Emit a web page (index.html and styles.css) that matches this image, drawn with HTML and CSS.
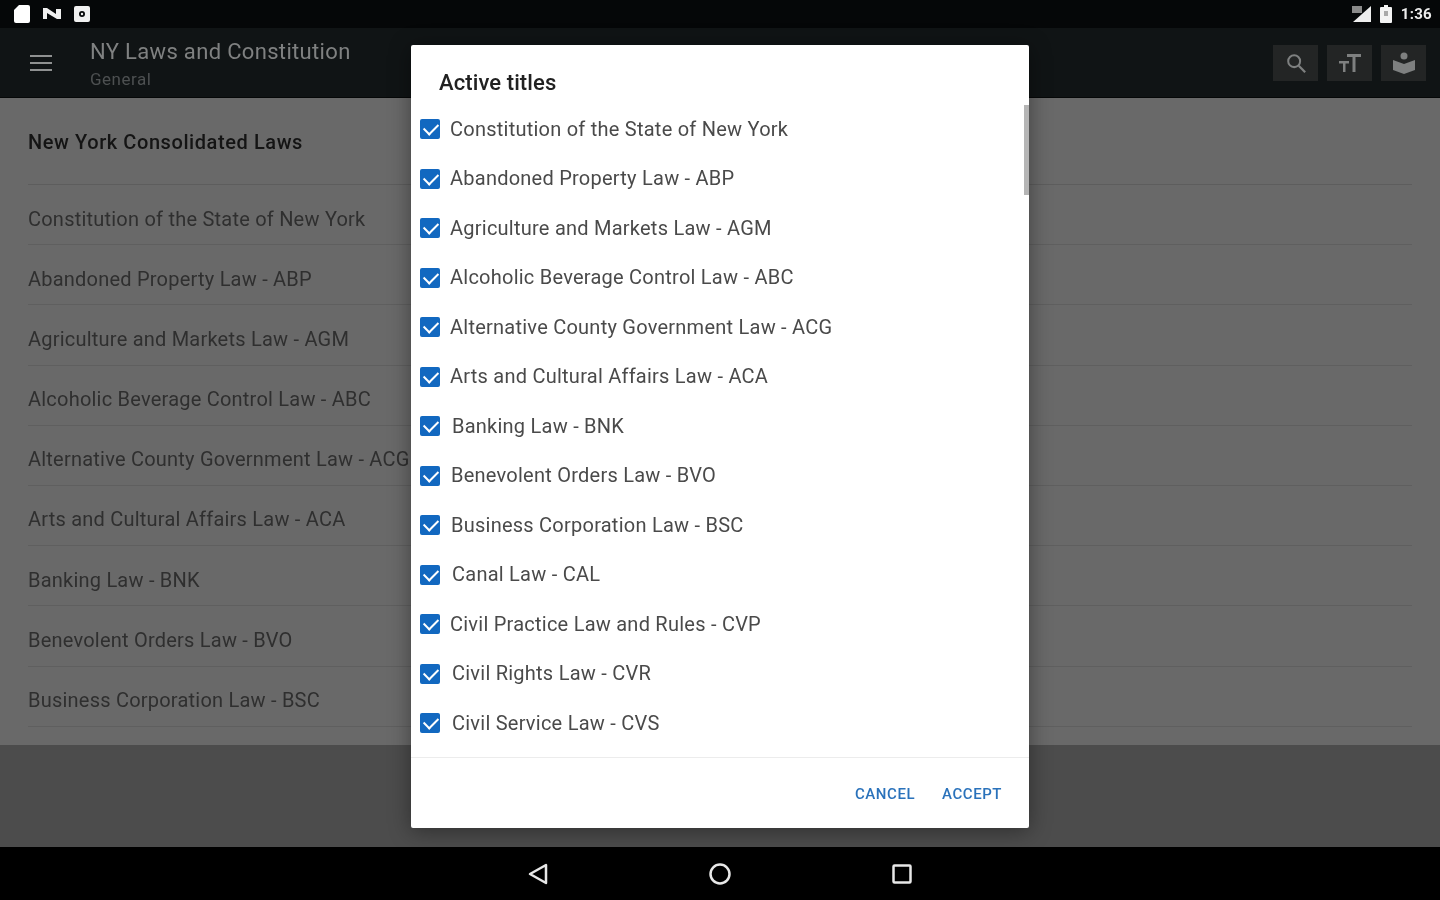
FILE: index.html
```html
<!DOCTYPE html>
<html lang="en">
<head>
    <meta charset="UTF-8">
    <title>NY Laws and Constitution</title>
    <link rel="stylesheet" href="styles.css">
</head>
<body>

    <div class="statusbar">
        <div class="status-left">
            <svg width="16" height="18" viewBox="0 0 16 18"><path d="M5 0h9a2 2 0 0 1 2 2v14a2 2 0 0 1-2 2H2a2 2 0 0 1-2-2V5z" fill="#fff"/></svg>
            <svg width="18" height="16" viewBox="0 0 18 16"><path d="M0 2h4l9 6V3h5v10h-4L4 7v6H0z" fill="#f0f0f0"/></svg>
            <svg width="16" height="16" viewBox="0 0 16 16"><path fill-rule="evenodd" d="M2 0h12a2 2 0 0 1 2 2v12a2 2 0 0 1-2 2H2a2 2 0 0 1-2-2V2a2 2 0 0 1 2-2zm6 5a3 3 0 1 0 0 6 3 3 0 0 0 0-6z" fill="#f0f0f0"/><circle cx="8" cy="8" r="1.200" fill="#f0f0f0"/></svg>
        </div>
        <div class="status-right">
            <svg width="20" height="18" viewBox="0 0 20 18"><path d="M20 1v16H2z" fill="#eee"/><path d="M1 1h10v7H1z" fill="#8a8a8a"/></svg>
            <svg width="12" height="18" viewBox="0 0 12 18"><path fill="#f4f4f4" d="M4 0h4v2h3a1 1 0 0 1 1 1v14a1 1 0 0 1-1 1H1a1 1 0 0 1-1-1V3a1 1 0 0 1 1-1h3z"/><path fill="#aaa" d="M4 6h4v5H4z"/></svg>
            <span class="clock">1:36</span>
        </div>
    </div>

    <div class="toolbar">
        <svg class="menu-icon" width="22" height="18" viewBox="0 0 22 18"><path d="M0 1h22v2H0zM0 8h22v2H0zM0 15h22v2H0z" fill="#8f9191"/></svg>
        <div class="toolbar-title">
            <div class="app-name">NY Laws and Constitution</div>
            <div class="app-sub">General</div>
        </div>
        <div class="toolbar-actions">
            <div class="action">
                <svg width="22" height="22" viewBox="0 0 24 24"><circle cx="10" cy="10" r="6.500" fill="none" stroke="#7e8080" stroke-width="2.200"/><path d="M15 15l7 7" stroke="#7e8080" stroke-width="2.400"/></svg>
            </div>
            <div class="action">
                <svg width="24" height="22" viewBox="0 0 24 22"><path d="M9 2h14v3h-5.500v15h-3V5H9zM1 9h10v2.500H7.500V20H5v-8.500H1z" fill="#7e8080"/></svg>
            </div>
            <div class="action">
                <svg width="24" height="24" viewBox="0 0 24 24"><circle cx="12" cy="5" r="3.500" fill="#7e8080"/><path d="M1 9l11 4 11-4v10l-11 4-11-4z" fill="#7e8080"/></svg>
            </div>
        </div>
    </div>

    <div class="content">
        <div class="list-head">New York Consolidated Laws</div>
        <div class="list-row">Constitution of the State of New York</div>
        <div class="list-row">Abandoned Property Law - ABP</div>
        <div class="list-row">Agriculture and Markets Law - AGM</div>
        <div class="list-row">Alcoholic Beverage Control Law - ABC</div>
        <div class="list-row">Alternative County Government Law - ACG</div>
        <div class="list-row">Arts and Cultural Affairs Law - ACA</div>
        <div class="list-row">Banking Law - BNK</div>
        <div class="list-row">Benevolent Orders Law - BVO</div>
        <div class="list-row">Business Corporation Law - BSC</div>
    </div>
    <div class="footer-space"></div>

    <div class="navbar">
        <svg width="24" height="24" viewBox="0 0 24 24"><path d="M20 3v18L4 12z" fill="none" stroke="#e8e8e8" stroke-width="2.500" stroke-linejoin="round"/></svg>
        <svg width="24" height="24" viewBox="0 0 24 24"><circle cx="12" cy="12" r="9.500" fill="none" stroke="#e8e8e8" stroke-width="2.500"/></svg>
        <svg width="24" height="24" viewBox="0 0 24 24"><rect x="3.500" y="3.500" width="17" height="17" rx="1" fill="none" stroke="#e8e8e8" stroke-width="2.500"/></svg>
    </div>

    <div class="dialog">
        <h2 class="dialog-title">Active titles</h2>
        <div class="dialog-list">
            <label class="check-row"><span class="check"></span>Constitution of the State of New York</label>
            <label class="check-row"><span class="check"></span>Abandoned Property Law - ABP</label>
            <label class="check-row"><span class="check"></span>Agriculture and Markets Law - AGM</label>
            <label class="check-row"><span class="check"></span>Alcoholic Beverage Control Law - ABC</label>
            <label class="check-row"><span class="check"></span>Alternative County Government Law - ACG</label>
            <label class="check-row"><span class="check"></span>Arts and Cultural Affairs Law - ACA</label>
            <label class="check-row shifted"><span class="check"></span>Banking Law - BNK</label>
            <label class="check-row shifted-sm"><span class="check"></span>Benevolent Orders Law - BVO</label>
            <label class="check-row shifted-sm"><span class="check"></span>Business Corporation Law - BSC</label>
            <label class="check-row shifted"><span class="check"></span>Canal Law - CAL</label>
            <label class="check-row"><span class="check"></span>Civil Practice Law and Rules - CVP</label>
            <label class="check-row shifted"><span class="check"></span>Civil Rights Law - CVR</label>
            <label class="check-row shifted"><span class="check"></span>Civil Service Law - CVS</label>
            <div class="scroll-thumb"></div>
        </div>
        <div class="dialog-actions">
            <span class="dialog-btn">CANCEL</span>
            <span class="dialog-btn">ACCEPT</span>
        </div>
    </div>

</body>
</html>
```

FILE: styles.css
```css
* {
    box-sizing: border-box;
}
body {
    margin: 0;
    width: 1440px;
    height: 900px;
    overflow: hidden;
    position: relative;
    font-family: Roboto, "Liberation Sans", sans-serif;
    background-color: #4c4c4c;
    filter: blur(0.6px);
}
.statusbar {
    height: 28px;
    background-color: #050708;
    display: flex;
    justify-content: space-between;
    align-items: center;
    padding: 0 8px 0 14px;
}
.status-left {
    display: flex;
    align-items: center;
    gap: 13px;
}
.status-right {
    display: flex;
    align-items: center;
    gap: 9px;
}
.clock {
    color: #eee;
    font-size: 15px;
    font-weight: 700;
    letter-spacing: 0.3px;
}
.toolbar {
    height: 70px;
    background-color: #101415;
    display: flex;
    align-items: center;
    padding: 0 14px 0 30px;
    border-bottom: 1px solid #060808;
}
.menu-icon {
    margin-right: 38px;
}
.toolbar-title {
    flex: 1;
    margin-top: 3px;
}
.app-name {
    color: #7f8181;
    font-size: 22px;
    line-height: 28px;
    letter-spacing: 0.33px;
}
.app-sub {
    color: #4d5051;
    font-size: 17px;
    line-height: 24px;
    margin-top: 1px;
    letter-spacing: 0.5px;
}
.toolbar-actions {
    display: flex;
    gap: 9px;
}
.action {
    width: 45px;
    height: 36px;
    background-color: #232525;
    display: flex;
    align-items: center;
    justify-content: center;
}
.content {
    height: 647px;
    background-color: #696969;
    padding: 0 28px;
}
.list-head {
    height: 87px;
    padding-top: 30px;
    font-size: 20px;
    line-height: 28px;
    font-weight: 500;
    letter-spacing: 0.58px;
    color: #141414;
    border-bottom: 1px solid #5d5d5d;
}
.list-row {
    height: 60.200px;
    padding-top: 19.500px;
    font-size: 20px;
    line-height: 28px;
    letter-spacing: 0.22px;
    color: #2f2f2f;
    border-bottom: 1px solid #5f5f5f;
}
.footer-space {
    height: 102px;
    background-color: #4c4c4c;
}
.navbar {
    height: 53px;
    background-color: #000;
    display: flex;
    justify-content: center;
    align-items: center;
    gap: 158px;
}
.dialog {
    position: absolute;
    left: 411px;
    top: 45px;
    width: 618px;
    height: 783px;
    background: #fff;
    border-radius: 2px;
    box-shadow: 0 3px 22px rgba(0, 0, 0, 0.4);
    display: flex;
    flex-direction: column;
}
.dialog-title {
    margin: 0;
    padding: 24px 28px 0;
    height: 60px;
    font-size: 22px;
    line-height: 28px;
    font-weight: 500;
    letter-spacing: 0.1px;
    color: #212121;
}
.dialog-list {
    position: relative;
    height: 653px;
    padding: 0 0 0 9px;
    border-bottom: 1px solid #ececec;
}
.check-row {
    height: 49.500px;
    display: flex;
    align-items: center;
    font-size: 20px;
    line-height: 27px;
    letter-spacing: 0.24px;
    color: #4a4a4a;
    padding-bottom: 1px;
}
.check {
    width: 20px;
    height: 20px;
    margin-right: 10px;
    border-radius: 2px;
    background-color: #1268c0;
    flex-shrink: 0;
    position: relative;
}
.check::after {
    content: "";
    position: absolute;
    left: 4px;
    top: 4px;
    width: 12px;
    height: 7px;
    border-left: 2.500px solid #fff;
    border-bottom: 2.500px solid #fff;
    transform: rotate(-45deg);
}
.shifted .check {
    margin-right: 12px;
}
.shifted-sm .check {
    margin-right: 11px;
}
.scroll-thumb {
    position: absolute;
    right: 0;
    top: 0;
    width: 5px;
    height: 90px;
    background-color: #b5b5b5;
}
.dialog-actions {
    flex: 1;
    display: flex;
    justify-content: flex-end;
    align-items: center;
    gap: 27px;
    padding: 2px 27px 0 0;
}
.dialog-btn {
    font-size: 15px;
    font-weight: 500;
    letter-spacing: 0.55px;
    color: #2a72bb;
}
```
